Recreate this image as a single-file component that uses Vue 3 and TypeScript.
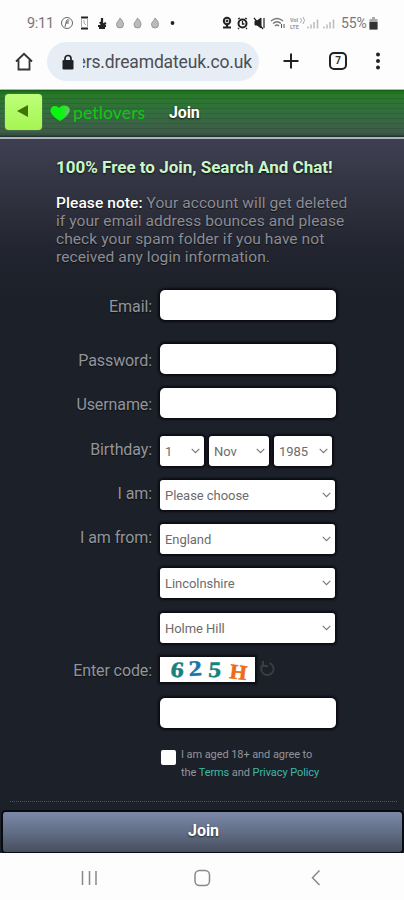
<script setup lang="ts">
import { ref } from 'vue'

interface SelectBox { value: string; width: number }
interface FormRow { label: string; top: number; boxes?: SelectBox[] }

const rows: FormRow[] = [
  { label: 'Email:', top: 0 },
  { label: 'Password:', top: 24 },
  { label: 'Username:', top: 14 },
  { label: 'Birthday:', top: 18, boxes: [{ value: '1', width: 44 }, { value: 'Nov', width: 60 }, { value: '1985', width: 58 }] },
  { label: 'I am:', top: 14, boxes: [{ value: 'Please choose', width: 175 }] },
  { label: 'I am from:', top: 14, boxes: [{ value: 'England', width: 175 }] },
  { label: '', top: 14, boxes: [{ value: 'Lincolnshire', width: 175 }] },
  { label: '', top: 15, boxes: [{ value: 'Holme Hill', width: 175 }] },
]
const agreed = ref(false)
</script>

<template>
  <div class="phone">
    <div class="status">
      <span class="time">9:11</span>
      <svg class="left-icons" width="122" height="16" viewBox="0 0 122 16" fill="none" stroke="#666">
        <circle cx="7" cy="8" r="5.5" /><path d="M5 12 6.500 5.500q2-2 2.500 0L6 8h3" />
        <path d="M21 2.500h7M21 13.500h7" stroke="#222" stroke-width="2" /><path d="M21.500 3v10M27.500 3v10M24 5v3l2 2" stroke="#aaa" />
        <path d="M42 3v8M38 11h8M40 7l2 3 4-2M39 13h6" stroke="#222" stroke-width="2.200" />
        <g fill="#bbb" stroke="#888" stroke-width=".8">
          <path d="M60 3c2 2 3.500 4 3.500 6.500a3.500 3.500 0 0 1-7 0C56.500 7 59 6 60 3Z" />
          <path d="M77.500 3c2 2 3.500 4 3.500 6.500a3.500 3.500 0 0 1-7 0C74 7 76.500 6 77.500 3Z" />
          <path d="M95 3c2 2 3.500 4 3.500 6.500a3.500 3.500 0 0 1-7 0C91.500 7 94 6 95 3Z" />
        </g>
        <circle cx="112.500" cy="8" r="1.900" fill="#222" stroke="none" />
      </svg>
      <svg class="right-icons" width="118" height="16" viewBox="0 0 118 16" fill="none" stroke="#222">
        <circle cx="6" cy="6" r="3.200" stroke-width="2" /><path d="M2 12.500h8M6 9v3" stroke-width="2.200" /><circle cx="6" cy="6" r="1" fill="#222" />
        <circle cx="21.500" cy="8.500" r="4" stroke-width="2" /><path d="m17 4 2-1M26 4l-2-1M21.500 6v3h2M18 13l-1 1M25 13l1 1" stroke-width="1.300" />
        <path d="M34 6h2l4-3v10l-4-3h-2z" fill="#222" /><path d="m33 3 9 11M43 3v10" stroke-width="1.200" />
        <path d="M50 6q6-5 12 0M52 8.500q4-3.500 8 0M54 11q2-2 4 0" stroke="#777" stroke-width="1.300" /><path d="M60.500 9v4M63 9v4" stroke="#555" />
        <g fill="#999" stroke="none" font-family="Roboto, sans-serif" font-size="5.500" font-weight="700"><text x="69" y="7">VoI</text><text x="69" y="13.700">LTE</text></g>
        <path d="M79.500 3q2 2 0 5M82 2q3 3 0 7" stroke="#aaa" />
        <path d="M87 13.500v-2M90 13.500v-4M93 13.500v-6.500M96.500 13.500v-9M103 13.500v-2M106 13.500v-4M109 13.500v-6.500M112.500 13.500v-9" stroke="#bbb" stroke-width="1.500" />
      </svg>
      <span class="percent">55%</span>
      <svg class="battery" width="9" height="13" viewBox="0 0 9 13"><path d="M3 0h3v2h2.500v10.500h-8V2H3z" fill="#aaa" /><path d="M.5 5h8v7.500h-8z" fill="#333" /></svg>
    </div>

    <div class="browser">
      <svg class="home" width="18" height="19" viewBox="0 0 18 19" fill="none" stroke="#333" stroke-width="1.800"><path d="M1 9.500 9 1.800l8 7.700M3.500 8v9.500h11V8" /></svg>
      <div class="address">
        <svg width="12" height="16" viewBox="0 0 12 16"><path d="M3 7V4.500a3 3 0 0 1 6 0V7" fill="none" stroke="#1d2025" stroke-width="1.700" /><rect x=".5" y="6" width="11" height="9.500" rx="1.200" fill="#1d2025" /></svg>
        <div class="url"><span>ers.dreamdateuk.co.uk</span></div>
      </div>
      <svg class="plus" width="16" height="16" viewBox="0 0 16 16"><path d="M8 .5v15M.5 8h15" stroke="#222" stroke-width="2" /></svg>
      <div class="tabs">7</div>
      <svg class="dots" width="6" height="18" viewBox="0 0 6 18" fill="#222"><circle cx="3" cy="2.500" r="2" /><circle cx="3" cy="9" r="2" /><circle cx="3" cy="15.500" r="2" /></svg>
    </div>

    <header class="header">
      <button class="back" aria-label="Back"><svg width="12" height="12" viewBox="0 0 12 12"><path d="M0 6 11 0v12z" fill="#3f7407" /></svg></button>
      <svg class="heart" width="20" height="17" viewBox="0 0 20 17">
        <defs><linearGradient id="leaf" x1="0" x2="1"><stop offset=".6" stop-color="#0bf511" /><stop offset="1" stop-color="#79bd78" /></linearGradient></defs>
        <path d="M10 16C5 13 0 9 .5 5 1 1 6-.5 9 3c3-4 9-3 10.500.5C21 8 15 13 10 16Z" fill="url(#leaf)" />
      </svg>
      <span class="brand">petlovers</span>
      <span class="title">Join</span>
    </header>

    <main class="content">
      <h1>100% Free to Join, Search And Chat!</h1>
      <p class="note">
        <span class="line"><b>Please note:</b> Your account will get deleted</span>
        <span class="line">if your email address bounces and please</span>
        <span class="line">check your spam folder if you have not</span>
        <span class="line">received any login information.</span>
      </p>

      <form class="form" @submit.prevent>
        <div v-for="(row, i) in rows" :key="i" class="row" :class="{ choice: row.boxes }" :style="{ marginTop: row.top + 'px' }">
          <span class="label">{{ row.label }}</span>
          <template v-if="row.boxes">
            <div v-for="box in row.boxes" :key="box.value" class="select" :style="{ width: box.width + 'px' }">
              <span>{{ box.value }}</span>
              <svg width="9" height="6" viewBox="0 0 9 6"><path d="m.7.8 3.800 3.800L8.300.8" fill="none" stroke="#777" stroke-width="1.100" /></svg>
            </div>
          </template>
          <input v-else class="input" />
        </div>

        <div class="row code-row">
          <span class="label">Enter code:</span>
          <svg class="captcha" width="95" height="25" viewBox="0 0 95 25" font-family="'Liberation Serif', serif" font-weight="700" font-size="22">
            <rect width="95" height="25" fill="#fff" />
            <g stroke-width=".5">
              <text transform="translate(10 20) skewX(-6) scale(1.200 1)" fill="#16817d" stroke="#16817d">6</text>
              <text transform="translate(29 19) rotate(-3) scale(1.200 1)" fill="#1c75a8" stroke="#1c75a8">2</text>
              <text transform="translate(48 20) skewX(-4) scale(1.150 1)" fill="#16817d" stroke="#16817d">5</text>
              <text transform="translate(69 21) rotate(7) scale(1.050 1)" fill="#ed6a18" stroke="#ed6a18" font-size="21">H</text>
            </g>
          </svg>
          <svg class="reload" width="17" height="18" viewBox="0 0 17 18"><path d="M10.500 3a6.200 6.200 0 1 1-5.500.6M4 1v5h5" fill="none" stroke="#393c41" stroke-width="2" /></svg>
        </div>
        <div class="row answer"><span class="label" /><input class="input" /></div>

        <div class="agree">
          <button type="button" class="check" aria-label="Agree" @click="agreed = !agreed">{{ agreed ? '✓' : '' }}</button>
          <div class="terms">
            <span class="line">I am aged 18+ and agree to</span>
            <span class="line">the <a>Terms</a> and <a>Privacy Policy</a></span>
          </div>
        </div>
      </form>
      <div class="rule" />
      <button class="join">Join</button>
    </main>

    <nav class="nav">
      <svg width="404" height="47" viewBox="0 0 404 47" fill="none" stroke="#888" stroke-width="1.500">
        <path d="M82.500 18v14M89.500 18v14M96 18v14" /><rect x="195" y="17.500" width="14.500" height="15" rx="4.500" /><path d="m319.500 17.500-7 7.300 7 7.200" />
      </svg>
    </nav>
  </div>
</template>

<style>
body { margin: 0; }
</style>

<style scoped>
* { box-sizing: border-box; }
.phone { width: 404px; height: 900px; overflow: hidden; display: flex; flex-direction: column; background: #fdfdfe; font-family: Roboto, sans-serif; }
.status { height: 40px; padding: 6px 0 0 27px; display: flex; align-items: center; color: #777; font-size: 14.500px; }
.time { width: 33px; letter-spacing: -.3px; }
.right-icons { margin-left: 39px; }
.percent { width: 28px; margin-left: 2px; letter-spacing: -.1px; font-size: 14px; }
.battery { flex: none; }
.browser { height: 49px; display: flex; align-items: flex-start; padding: 2px 0 0 15px; }
.home { margin-top: 10px; }
.address { width: 212px; height: 39px; margin-left: 14px; border-radius: 20px; background: #e7edf4; display: flex; align-items: center; padding-left: 15px; }
.url { width: 169px; height: 26px; margin-left: 9px; overflow: hidden; display: flex; justify-content: flex-end; font-size: 17.500px; letter-spacing: -.14px; line-height: 26px; color: #4b4e54; white-space: nowrap; }
.plus { margin: 11px 0 0 24px; }
.tabs { width: 18px; height: 18px; margin: 10px 0 0 30px; border: 2px solid #222; border-radius: 5px; font-size: 10px; font-weight: 700; line-height: 14px; text-align: center; color: #333; }
.dots { margin: 10px 0 0 28px; }
.header { height: 50px; flex: none; display: flex; align-items: flex-start; padding: 4px 0 0 5px; border-top: 1px solid #9ac59e; border-bottom: 2px solid #b2b0b9; background: repeating-linear-gradient(transparent 0 3px, rgba(20, 60, 30, .2) 3px 4px, transparent 4px 5px), linear-gradient(#145d16 0, #267927 3px, #2d7432 12px, #366a42 27px, #40584a 44px, #173126 47px); }
.back { width: 37px; height: 36px; border: 0; border-radius: 4px; background: linear-gradient(#beff78, #a4f552); padding: 0 2px 0 0; display: flex; align-items: center; justify-content: center; box-shadow: 0 0 1px #c3ff80; }
.back svg { margin-top: -3px; }
.heart { margin: 11px 0 0 8px; }
.brand { width: 75px; margin: 7px 0 0 3px; font: 17.500px/24px Lato, sans-serif; letter-spacing: .15px; color: #0fc814; white-space: nowrap; }
.title { margin: 8px 0 0 21px; color: #fff; font-size: 16px; font-weight: 700; line-height: 22px; letter-spacing: -.15px; text-shadow: 0 1px 2px #111; }
.content { height: 714px; display: flex; flex-direction: column; background: linear-gradient(#3e3f51 0, #353645 40px, #22252f 110px, #1c2029 155px, #1c2028 100%); }
h1 { margin: 17px 0 0 56px; color: #c8f7ca; font-size: 17px; line-height: 22px; text-shadow: 0 1px 2px #111; white-space: nowrap; }
.note { margin: 16px 0 0 56px; color: #8b8d96; font-size: 15.500px; line-height: 18px; letter-spacing: .08px; text-shadow: 0 1px 1px #111; }
.note b { color: #fff; font-weight: 500; }
.line { display: block; white-space: nowrap; }
.form { margin-top: 24px; }
.row { height: 30px; display: flex; }
.label { width: 152px; margin-right: 8px; flex: none; text-align: right; font-size: 16px; letter-spacing: -.1px; line-height: 33px; color: #92959c; text-shadow: 0 1px 1px #111; white-space: nowrap; }
.choice .label { line-height: 28px; }
.input { width: 176px; height: 30px; border: 0; border-radius: 5px; padding: 0 6px; background: #fff; outline: 0; box-shadow: 0 0 2px 2px #0c0d13; }
.select { height: 30px; margin-right: 5px; padding: 0 4px 0 5px; border-radius: 3px; background: #fff; box-shadow: 0 0 2px 2px #0c0d13; display: flex; align-items: center; justify-content: space-between; color: #6c6c6c; font-size: 13px; letter-spacing: -.05px; white-space: nowrap; }
.code-row { margin-top: 14px; height: 25px; }
.code-row .label { line-height: 28px; }
.captcha { overflow: visible; box-shadow: 0 0 2px 2px #0c0d13; }
.reload { margin: 3px 0 0 4px; }
.answer { margin-top: 16px; }
.agree { display: flex; margin: 17px 0 0 161px; }
.check { width: 15px; height: 15px; margin-top: 5px; border: 0; border-radius: 2px; padding: 0; background: #fff; color: #333; font-size: 12px; line-height: 15px; }
.terms { margin-left: 5px; padding-top: 1px; color: #92959c; font-size: 11px; line-height: 17.500px; letter-spacing: -.08px; }
.terms a { color: #3fb8ab; }
.rule { margin: 20px 7px 0 10px; border-top: 1px dotted #51555c; }
.join { width: 399px; height: 40px; margin: 10px 0 0 3px; padding: 0 0 2px 2px; flex: none; border: 0; border-radius: 3px; background: linear-gradient(#7b89a8, #626e86 50%, #474f5f); box-shadow: 0 0 0 2px #080a11; color: #fff; font: 700 16px/38px Roboto, sans-serif; letter-spacing: -.1px; text-shadow: 0 1px 2px #222; }
.nav { height: 47px; flex: none; background: #fdfdfd; }
</style>
